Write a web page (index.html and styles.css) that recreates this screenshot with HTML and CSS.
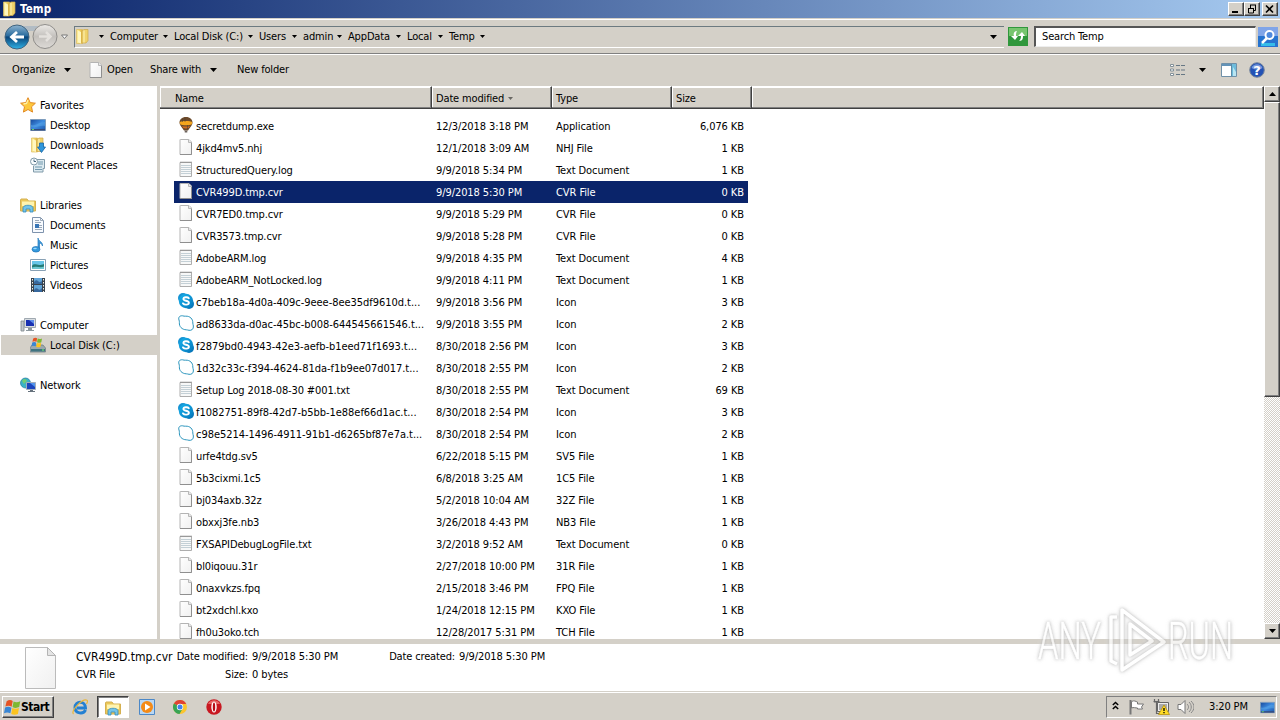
FILE: index.html
```html
<!DOCTYPE html>
<html lang="en">
<head>
<meta charset="utf-8">
<title>Temp</title>
<link rel="stylesheet" href="styles.css">
</head>
<body>
<svg class="defs" width="0" height="0" aria-hidden="true">
  <defs>
    <linearGradient id="gold" x1="0" x2="1"><stop offset="0" stop-color="#fff3a8"/><stop offset=".55" stop-color="#f3d665"/><stop offset="1" stop-color="#d9a936"/></linearGradient>
    <linearGradient id="paper" x1="0" y1="0" x2="1" y2="1"><stop offset="0" stop-color="#fff"/><stop offset="1" stop-color="#f0f0f0"/></linearGradient>
    <linearGradient id="blue" x1="0" y1="0" x2="1" y2="1"><stop offset="0" stop-color="#174a9c"/><stop offset=".5" stop-color="#3f8ce0"/><stop offset="1" stop-color="#1c54a8"/></linearGradient>
    <linearGradient id="sky" x1="0" y1="0" x2="1" y2="1"><stop offset="0" stop-color="#16b1ec"/><stop offset="1" stop-color="#0579bd"/></linearGradient>
    <linearGradient id="back" x1="0" y1="0" x2="0" y2="1"><stop offset="0" stop-color="#8fb4cf"/><stop offset=".45" stop-color="#286b9e"/><stop offset=".5" stop-color="#0a4479"/><stop offset="1" stop-color="#2fb2e6"/></linearGradient>
    <linearGradient id="fwd" x1="0" y1="0" x2="0" y2="1"><stop offset="0" stop-color="#eceae7"/><stop offset=".5" stop-color="#c3c0bc"/><stop offset="1" stop-color="#dedbd7"/></linearGradient>
    <symbol id="file" viewBox="0 0 16 16"><path d="M2.500.5h8.500l2.500 2.500v12.500h-11.500V.5z" fill="url(#paper)" stroke="#b4b4b4"/><path d="M13.500 3.500v12H2" fill="none" stroke="#8f8f8f"/><path d="M10.500.5v3h3" fill="#e8e8e8" stroke="#b8b8b8"/></symbol>
    <symbol id="text" viewBox="0 0 16 16"><path d="M2 1.500h11.500v14H2z" fill="#f7f8f8" stroke="#adadad"/><path d="M3 4.500h10M3 6.500h10M3 8.500h10M3 10.500h10M3 12.500h10" stroke="#c4d0d6"/><path d="M2.500 1.500h11" stroke="#858585" stroke-dasharray="1 1"/><path d="M2.500 .5h12" stroke="#c6c6c6" stroke-dasharray="1 1"/></symbol>
    <symbol id="skype" viewBox="0 0 16 16"><circle cx="5" cy="5" r="5" fill="#1593d3"/><circle cx="11" cy="11" r="5" fill="#0879bc"/><circle cx="8" cy="8" r="7.200" fill="url(#sky)"/><path d="M10.800 5.200C9.900 3.800 5.400 3.700 5.400 6c0 2.200 5.500 1.300 5.500 3.700 0 2.500-4.700 2.400-5.900.7" fill="none" stroke="#fff" stroke-width="1.900" stroke-linecap="round"/></symbol>
    <symbol id="skypeo" viewBox="0 0 16 16"><path d="M1 5C0 2 2 .5 4.600.8c1.200.2 1.600.6 3.100.4C12 .9 15 4 14.800 8c0 1.300.5 1.900.6 3 .3 3.300-2 4.700-4.400 4.300-1-.1-1.600-.5-2.700-.5C4 14.700.9 11.500 1.400 7.500 1.500 6.500 1.200 6 1 5z" fill="#fff" stroke="#2b95bd"/></symbol>
    <symbol id="balloon" viewBox="0 0 16 16"><path d="M8 0c4.200 0 6.500 2.500 6.500 5.500 0 3.200-3.300 5.700-4.500 8H6C4.800 11.200 1.500 8.700 1.500 5.500 1.500 2.500 3.800 0 8 0z" fill="#6c4a2a"/><path d="M1.700 5c2-1.500 10.500-1.500 12.600 0l-.6 2.400c-2 1-9.400 1-11.400 0z" fill="#f4a51d"/><path d="M4 9c2 .8 6 .8 8 0l-1.300 2C9 11.500 7 11.500 5.300 11z" fill="#d06c21"/><path d="M7 1v4M9.500 8v4M4.500 2v3" stroke="#413c3a" stroke-width=".5"/><path d="M6.700 13.500h2.600v2H6.700z" fill="#6d635c"/></symbol>
    <symbol id="folder" viewBox="0 0 16 16"><path d="M1.500 1h6v14h-6z" fill="url(#gold)" stroke="#dcba5c" stroke-width=".7"/><path d="M7 2.500 9 1h4v11l-2 2.500H7z" fill="#efd26b" stroke="#cfa94a" stroke-width=".7"/><path d="M3 2l3 1.500V15L3 14z" fill="#fff6bf"/><path d="M9 2v12" stroke="#fff4b8"/></symbol>
    <symbol id="star" viewBox="0 0 16 16"><path d="M8 .7l2.200 4.900 5.200.6-3.900 3.600 1.100 5.300L8 12.500l-4.600 2.600 1.100-5.300L.6 6.200l5.200-.6z" fill="#fdc83c" stroke="#e28a25"/><path d="M8 3 6.500 6.500 3.500 7" fill="none" stroke="#fff0a7" stroke-width="1.300"/></symbol>
    <symbol id="desktop" viewBox="0 0 16 16"><path d="M.5 2.500h15v11H.5z" fill="url(#blue)" stroke="#7d9cbd"/><path d="M1 12h14v1.500H1z" fill="#34497a"/><path d="M2 12.500h2" stroke="#5fd165"/><path d="M1 8c5 1 8-3 14-3v4c-5-1-9 2-14 1z" fill="#5aa7e8" opacity=".5"/></symbol>
    <symbol id="downloads" viewBox="0 0 16 16"><use href="#folder"/><path d="M9.500 6h4v4h2L11.500 15.500 7.500 10h2z" fill="#2f96dc" stroke="#1464a7" stroke-width=".8"/></symbol>
    <symbol id="recent" viewBox="0 0 16 16"><path d="M5 2.500h9.500v9H13v3.500H3.500V9" fill="#dceaf0" stroke="#819baa"/><path d="M8 5h5M8 7h5M5 10h7M5 12.500h7" stroke="#7299ae"/><circle cx="4" cy="4.500" r="3.500" fill="#f7fbfd" stroke="#829ba9"/><path d="M4 2.500v2h2" fill="none" stroke="#43647b"/></symbol>
    <symbol id="library" viewBox="0 0 16 16"><path d="M.5 3V14h15V4h-7L7 2H1z" fill="#ebc85a" stroke="#d5b050"/><path d="M2 4.500h12V9H2z" fill="#fff4b0"/><path d="M3 15V10.500C4 7.500 12 7.500 13 10.500V15h-3v-3H6v3z" fill="#74c4e9" stroke="#318bbc" stroke-width=".8"/></symbol>
    <symbol id="documents" viewBox="0 0 16 16"><path d="M2.500.5h8l3 3v12h-11z" fill="#f8fbff" stroke="#7e93ad"/><path d="M10.500.5v3h3M5 3.500h4M5 5.500h6M9 8.500h3M9 10.500h3M5 12.500h7" fill="none" stroke="#9ba9b8"/><path d="M5 7h4v4H5z" fill="#3976b6"/></symbol>
    <symbol id="music" viewBox="0 0 16 16"><path d="M8 1c.5 3.500 5 3.500 4.500 8-.5-2-2-3-3-3v6H8z" fill="#3d9adb" stroke="#2378bb" stroke-width=".7"/><ellipse cx="6" cy="12.300" rx="4" ry="2.800" fill="#3599dc" stroke="#2476b7" stroke-width=".7"/><ellipse cx="5" cy="11.500" rx="1.800" ry=".8" fill="#9bdcff"/></symbol>
    <symbol id="pictures" viewBox="0 0 16 16"><path d="M.5 2.500h15v11H.5z" fill="#fff" stroke="#88a1b5"/><path d="M2 4h12v8H2z" fill="#69c6e8"/><path d="M2 9c3-4 5 1 12-2v5H2z" fill="#267c76"/><path d="M2 10.500c5-2 8 1 12-1V12H2z" fill="#6dc8d1"/></symbol>
    <symbol id="videos" viewBox="0 0 16 16"><path d="M1 1h14v14H1z" fill="#38424e"/><path d="M4 1h8v6H4zm0 7h8v7H4z" fill="#62a5d9"/><path d="M4 5c4-5 4 3 8-1v3H4zm0 8c4-5 4 3 8-2v4H4z" fill="#37689d"/><path d="M2.500 2v13M13.500 2v13" stroke="#f2f2e5" stroke-dasharray="1.500 1.500"/></symbol>
    <symbol id="computer" viewBox="0 0 16 16"><path d="M1 4h3v10H1z" fill="#c3c8cc" stroke="#7b858b" stroke-width=".8"/><path d="M4.500 1.500h11v9h-11z" fill="#d7dce0" stroke="#a0a9b1"/><path d="M6 3h8v6H6z" fill="#1830b1"/><path d="m9 3 5 4V3z" fill="#5c8cea"/><path d="M8 11h4v2h2v1H6v-1h2z" fill="#8d989e"/></symbol>
    <symbol id="winflag" viewBox="0 0 16 16"><path d="M2.500 2c2-1.300 4-1.400 5.700-.2L7.200 7.300C5.500 6 3.500 6 1.300 7z" fill="#e65323"/><path d="M9 2.300c2 1 4 .8 6.300-.2l-1 5.500c-2 1-4.300 1.100-6.300 0z" fill="#7db832"/><path d="M1 8c2-1 4-1 6 .2l-1 5.300c-2-1.200-4-1-6-.2z" fill="#3986d4"/><path d="M7.800 8.500c2 1 4.200 1 6.300 0l-1 5.500c-2 1-4.300 1-6.300 0z" fill="#fbc31f"/></symbol>
    <symbol id="disk" viewBox="0 0 16 16"><path d="m2 8-2 3v4h15.500v-4L13 8z" fill="#9ba8ae" stroke="#687980" stroke-width=".7"/><path d="M1 12h14v2.500H1z" fill="#407480"/><path d="M12 13h2" stroke="#79f073"/><use href="#winflag" x="1" width="12" height="11"/></symbol>
    <symbol id="network" viewBox="0 0 16 16"><circle cx="5.500" cy="6" r="5" fill="#3ab2c7" stroke="#217b9d" stroke-width=".7"/><path d="M2 4c2-3 4-2 5 0L4 7z" fill="#70cc75"/><path d="M6.500 5.500h9v7h-9z" fill="#1b45bd" stroke="#a3adba"/><path d="m10 6 5 4V6z" fill="#5294ec"/><path d="M10 13h3v1h2v1H8v-1h2z" fill="#66727d"/></symbol>
    <symbol id="tri" viewBox="0 0 7 4"><path d="M0 0h7L3.500 4z"/></symbol>
  </defs>
</svg>

<div class="screen">
  <header class="titlebar">
    <svg class="ticon"><use href="#folder"/></svg><b>Temp</b>
    <div class="winbtns">
      <span class="btn"><svg viewBox="0 0 12 10"><path d="M2 8h6" stroke="#000" stroke-width="2"/></svg></span>
      <span class="btn"><svg viewBox="0 0 12 10"><path d="M4 1h6M4.500 1v3M9.500 1v5.500H8M2 4.500h6M2.500 4v5h5V4" fill="none" stroke="#000"/></svg></span>
      <span class="btn last"><svg viewBox="0 0 12 10"><path d="m2 1.500 7 7m0-7-7 7" stroke="#000" stroke-width="1.600"/></svg></span>
    </div>
  </header>

  <div class="address">
    <svg class="nav" width="66" height="30" viewBox="0 0 66 30"><path d="M13 4h28v5H13z" fill="#b2bcc4"/><circle cx="13" cy="15" r="12" fill="url(#back)" stroke="#40647f"/><path d="M20 15H8m5-5-5.500 5 5.500 5" fill="none" stroke="#fff" stroke-width="2.800"/><circle cx="41" cy="14.500" r="12" fill="url(#fwd)" stroke="#8f8d8a"/><path d="M35 14.500h11m-4-4.500 4.500 4.500L42 19" fill="none" stroke="#e4e1dd" stroke-width="2.500"/><path d="M57.500 13h6l-3 3.500z" fill="#fff" stroke="#777"/></svg>
    <div class="crumbs">
      <svg class="cfold"><use href="#folder"/></svg>
      <svg class="arr"><use href="#tri"/></svg><span class="c1">Computer</span>
      <svg class="arr"><use href="#tri"/></svg><span class="c2">Local Disk (C:)</span>
      <svg class="arr"><use href="#tri"/></svg><span class="c3">Users</span>
      <svg class="arr"><use href="#tri"/></svg><span class="c4">admin</span>
      <svg class="arr"><use href="#tri"/></svg><span class="c5">AppData</span>
      <svg class="arr"><use href="#tri"/></svg><span class="c6">Local</span>
      <svg class="arr"><use href="#tri"/></svg><span class="c7">Temp</span>
      <svg class="arr"><use href="#tri"/></svg>
      <svg class="big end"><use href="#tri"/></svg>
    </div>
    <svg class="refresh" width="20" height="19" viewBox="0 0 20 19"><path d="M0 0h20v19H0z" fill="#30973c"/><path d="M1 1h18v8H1z" fill="#77c56f"/><path d="M9 4C6 4 5 7 6 9H3l4 4 3-4H8c0-2 0-3 1-5zm2 10c4 0 4-3 4-5h2l-3-4-4 4h3c0 3-1 4-2 5z" fill="#fff"/></svg>
    <div class="search">Search Temp</div>
    <svg class="go" width="20" height="20" viewBox="0 0 20 20"><path d="M0 0h20v20H0z" fill="#2673cf"/><path d="M0 0h20v9H0z" fill="#80a5e8"/><path d="M3 16h14v3H3z" fill="#34bce9"/><circle cx="11.500" cy="8" r="4" fill="#4f89dd" stroke="#fff" stroke-width="2"/><path d="m9 11-5 5" stroke="#fff" stroke-width="2.500"/></svg>
  </div>

  <div class="commands">
    <span class="k1">Organize</span><svg class="big"><use href="#tri"/></svg>
    <svg class="open"><use href="#file"/></svg><span class="k2">Open</span>
    <span class="k3">Share with</span><svg class="big"><use href="#tri"/></svg>
    <span class="k4">New folder</span>
    <div class="cmdright">
      <svg width="16" height="14" viewBox="0 0 16 14"><path d="M.5 1.500h3v2h-3zm0 4.500h3v2h-3zm0 4.500h3v2h-3z" fill="#fff" stroke="#829099"/><path d="M6 2.500h4m1 0h4M6 7h4m1 0h4M6 11.500h4m1 0h4" stroke="#667784"/></svg>
      <svg class="big"><use href="#tri"/></svg>
      <svg class="pane" width="17" height="14" viewBox="0 0 17 14"><path d="M.5.5h15v13H.5z" fill="#fff" stroke="#6f90a8"/><path d="M1 2h9" stroke="#6393b8" stroke-width="2"/><path d="M11 1h4v12h-4z" fill="#6ebcdc"/><path d="M10.500 1v12" stroke="#5b8aa6"/><path d="m12 4 3 5v4h-3z" fill="#b9e5f2"/></svg>
      <svg class="help" width="16" height="16" viewBox="0 0 16 16"><circle cx="8" cy="8" r="7.300" fill="#2352b5" stroke="#77869c"/><path d="M2.500 6C4 1 12 1 13.500 6 10 8 6 8 2.500 6z" fill="#7697dc"/><text x="8" y="12.500" text-anchor="middle" class="q">?</text></svg>
    </div>
  </div>

  <main class="body">
    <nav class="side">
      <div class="s root"><svg><use href="#star"/></svg><span>Favorites</span></div>
      <div class="s"><svg><use href="#desktop"/></svg><span>Desktop</span></div>
      <div class="s"><svg><use href="#downloads"/></svg><span>Downloads</span></div>
      <div class="s"><svg><use href="#recent"/></svg><span>Recent Places</span></div>
      <div class="s root gap"><svg><use href="#library"/></svg><span>Libraries</span></div>
      <div class="s"><svg><use href="#documents"/></svg><span>Documents</span></div>
      <div class="s"><svg><use href="#music"/></svg><span>Music</span></div>
      <div class="s"><svg><use href="#pictures"/></svg><span>Pictures</span></div>
      <div class="s"><svg><use href="#videos"/></svg><span>Videos</span></div>
      <div class="s root gap"><svg><use href="#computer"/></svg><span>Computer</span></div>
      <div class="s on"><svg><use href="#disk"/></svg><span>Local Disk (C:)</span></div>
      <div class="s root gap"><svg><use href="#network"/></svg><span>Network</span></div>
    </nav>
    <section class="list">
      <div class="head"><span>Name</span><span>Date modified<svg class="sort"><use href="#tri"/></svg></span><span>Type</span><span>Size</span><span></span></div>
      <div class="rows">
        <div class="r"><svg><use href="#balloon"/></svg><span>secretdump.exe</span><span>12/3/2018 3:18 PM</span><span>Application</span><span>6,076 KB</span></div>
        <div class="r"><svg><use href="#file"/></svg><span>4jkd4mv5.nhj</span><span>12/1/2018 3:09 AM</span><span>NHJ File</span><span>1 KB</span></div>
        <div class="r"><svg><use href="#text"/></svg><span>StructuredQuery.log</span><span>9/9/2018 5:34 PM</span><span>Text Document</span><span>1 KB</span></div>
        <div class="r sel"><svg><use href="#file"/></svg><span>CVR499D.tmp.cvr</span><span>9/9/2018 5:30 PM</span><span>CVR File</span><span>0 KB</span></div>
        <div class="r"><svg><use href="#file"/></svg><span>CVR7ED0.tmp.cvr</span><span>9/9/2018 5:29 PM</span><span>CVR File</span><span>0 KB</span></div>
        <div class="r"><svg><use href="#file"/></svg><span>CVR3573.tmp.cvr</span><span>9/9/2018 5:28 PM</span><span>CVR File</span><span>0 KB</span></div>
        <div class="r"><svg><use href="#text"/></svg><span>AdobeARM.log</span><span>9/9/2018 4:35 PM</span><span>Text Document</span><span>4 KB</span></div>
        <div class="r"><svg><use href="#text"/></svg><span>AdobeARM_NotLocked.log</span><span>9/9/2018 4:11 PM</span><span>Text Document</span><span>1 KB</span></div>
        <div class="r long"><svg><use href="#skype"/></svg><span>c7beb18a-4d0a-409c-9eee-8ee35df9610d.t...</span><span>9/9/2018 3:56 PM</span><span>Icon</span><span>3 KB</span></div>
        <div class="r long"><svg><use href="#skypeo"/></svg><span>ad8633da-d0ac-45bc-b008-644545661546.t...</span><span>9/9/2018 3:55 PM</span><span>Icon</span><span>2 KB</span></div>
        <div class="r long"><svg><use href="#skype"/></svg><span>f2879bd0-4943-42e3-aefb-b1eed71f1693.t...</span><span>8/30/2018 2:56 PM</span><span>Icon</span><span>3 KB</span></div>
        <div class="r long"><svg><use href="#skypeo"/></svg><span>1d32c33c-f394-4624-81da-f1b9ee07d017.t...</span><span>8/30/2018 2:55 PM</span><span>Icon</span><span>2 KB</span></div>
        <div class="r"><svg><use href="#text"/></svg><span>Setup Log 2018-08-30 #001.txt</span><span>8/30/2018 2:55 PM</span><span>Text Document</span><span>69 KB</span></div>
        <div class="r long"><svg><use href="#skype"/></svg><span>f1082751-89f8-42d7-b5bb-1e88ef66d1ac.t...</span><span>8/30/2018 2:54 PM</span><span>Icon</span><span>3 KB</span></div>
        <div class="r long"><svg><use href="#skypeo"/></svg><span>c98e5214-1496-4911-91b1-d6265bf87e7a.t...</span><span>8/30/2018 2:54 PM</span><span>Icon</span><span>2 KB</span></div>
        <div class="r"><svg><use href="#file"/></svg><span>urfe4tdg.sv5</span><span>6/22/2018 5:15 PM</span><span>SV5 File</span><span>1 KB</span></div>
        <div class="r"><svg><use href="#file"/></svg><span>5b3cixmi.1c5</span><span>6/8/2018 3:25 AM</span><span>1C5 File</span><span>1 KB</span></div>
        <div class="r"><svg><use href="#file"/></svg><span>bj034axb.32z</span><span>5/2/2018 10:04 AM</span><span>32Z File</span><span>1 KB</span></div>
        <div class="r"><svg><use href="#file"/></svg><span>obxxj3fe.nb3</span><span>3/26/2018 4:43 PM</span><span>NB3 File</span><span>1 KB</span></div>
        <div class="r"><svg><use href="#text"/></svg><span>FXSAPIDebugLogFile.txt</span><span>3/2/2018 9:52 AM</span><span>Text Document</span><span>0 KB</span></div>
        <div class="r"><svg><use href="#file"/></svg><span>bl0iqouu.31r</span><span>2/27/2018 10:00 PM</span><span>31R File</span><span>1 KB</span></div>
        <div class="r"><svg><use href="#file"/></svg><span>0naxvkzs.fpq</span><span>2/15/2018 3:46 PM</span><span>FPQ File</span><span>1 KB</span></div>
        <div class="r"><svg><use href="#file"/></svg><span>bt2xdchl.kxo</span><span>1/24/2018 12:15 PM</span><span>KXO File</span><span>1 KB</span></div>
        <div class="r"><svg><use href="#file"/></svg><span>fh0u3oko.tch</span><span>12/28/2017 5:31 PM</span><span>TCH File</span><span>1 KB</span></div>
      </div>
    </section>
    <div class="scroll"><span class="sb"><svg><use href="#tri" transform="rotate(180 3.500 2)"/></svg></span><span class="thumb"></span><span class="track"></span><span class="sb"><svg><use href="#tri"/></svg></span></div>
  </main>

  <section class="details">
    <svg class="bigfile" viewBox="0 0 32 42"><path d="M.5.5h22l8 8v33H.5z" fill="url(#paper)" stroke="#bbb"/><path d="M22.500.5v8h8z" fill="#e4e4e4" stroke="#b4b4b4"/></svg>
    <div class="dn"><span class="fn">CVR499D.tmp.cvr</span><span>CVR File</span></div>
    <div class="dl"><span>Date modified:</span><span>Size:</span></div>
    <div class="dv"><span>9/9/2018 5:30 PM</span><span>0 bytes</span></div>
    <div class="dl created"><span>Date created:</span></div>
    <div class="dv"><span>9/9/2018 5:30 PM</span></div>
  </section>

  <footer class="taskbar">
    <div class="start"><svg><use href="#winflag"/></svg><b>Start</b></div>
    <svg class="q1" width="16" height="16" viewBox="0 0 16 16"><path d="M13.500 11c-2 4.500-10.500 4-10.500-2.500C3 1.500 13.500 1.500 13.500 9H5" fill="none" stroke="#2380d2" stroke-width="3"/><path d="M1.500 15C-2 12 11-1 15 1.300c1 .7.500 2-.5 3.700" fill="none" stroke="#e9b63a" stroke-width="1.200"/></svg>
    <div class="active"><svg><use href="#library"/></svg></div>
    <svg class="q2" width="16" height="16" viewBox="0 0 16 16"><path d="M.5.5h15v15H.5z" fill="#b9d7f3" stroke="#4c88c7"/><circle cx="8" cy="8" r="6" fill="#f48a16"/><path d="m6 4.500 5.500 3.500L6 11.500z" fill="#fff"/></svg>
    <svg class="q3" width="14" height="14" viewBox="0 0 14 14"><circle cx="7" cy="7" r="7" fill="#fbc52d"/><path d="M7 7 .9 3.500A7 7 0 0 1 13.200 4H7z" fill="#df4335"/><path d="M7 7 .9 3.500A7 7 0 0 0 6.500 14l3.200-5.500z" fill="#38a455"/><circle cx="7" cy="7" r="3.200" fill="#fff"/><circle cx="7" cy="7" r="2.500" fill="#4182ed"/></svg>
    <svg class="q4" width="16" height="16" viewBox="0 0 16 16"><circle cx="8" cy="8" r="7.700" fill="#c81821"/><path d="M2 5C4 0 12 0 14 5z" fill="#e76565"/><ellipse cx="8" cy="8" rx="2.700" ry="5.500" fill="#fff"/><ellipse cx="8" cy="8" rx="1.200" ry="4.600" fill="#b80c17"/></svg>
    <div class="tray">
      <svg class="t0" width="7" height="9" viewBox="0 0 7 9"><path d="m.8 4 2.700-2.500L6.200 4M.8 8l2.700-2.500L6.200 8" fill="none" stroke="#000" stroke-width="1.500"/></svg>
      <svg class="t1" width="16" height="16" viewBox="0 0 16 16"><path d="M1.500 1v14.500" stroke="#777" stroke-width="2"/><path d="M2.500 2.500c3-1.500 4 0 6 .5v2h6l-2 3 1 2h-5V9c-2 0-4-1-6 0z" fill="#fff" stroke="#777"/></svg>
      <svg class="t2" width="17" height="16" viewBox="0 0 17 16"><path d="M4.500 3.500h11v9h-11z" fill="#eee" stroke="#666"/><path d="M6 5h8v6H6z" fill="#aaa"/><path d="M1.500 0v3h4V0M3.500 3v11.500H8M.5 2.500h6" fill="none" stroke="#666" stroke-width="1.200"/><path d="m11 6 5.500 9.500h-11z" fill="#ffdc27" stroke="#b28a00" stroke-width=".7"/><path d="M11 9v3m0 1v1.300" stroke="#000" stroke-width="1.300"/></svg>
      <svg class="t3" width="17" height="14" viewBox="0 0 17 14"><path d="M1 4.500h3l4-4v13l-4-4H1z" fill="#fff" stroke="#777"/><path d="M10 4c2 2 2 4 0 6m2-8c3 3 3 7 0 10m2-11c4 4 4 8 0 12" fill="none" stroke="#888"/></svg>
      <span>3:20 PM</span>
      <svg class="t4"><use href="#desktop"/></svg>
    </div>
  </footer>

  <svg class="watermark" width="210" height="80" viewBox="0 0 210 80">
    <g class="wm">
      <text x="8" y="56" textLength="63" lengthAdjust="spacingAndGlyphs">ANY</text>
      <text x="138" y="56" textLength="65" lengthAdjust="spacingAndGlyphs">RUN</text>
      <path d="M87 14h-6v44l6 3M92 7v60l42-28zM100 21v31l22-14z" fill="none" stroke="#fff" stroke-width="3.500" stroke-linejoin="round"/>
    </g>
  </svg>
</div>
</body>
</html>
```
FILE: styles.css
```css
* { box-sizing: border-box; }
body { margin: 0; background: #fff; color: #000; overflow: hidden;
  font: 11px/14px "DejaVu Sans Condensed", "DejaVu Sans", sans-serif; font-stretch: condensed; letter-spacing: -.15px; }
svg { flex: none; display: block; }
span { white-space: nowrap; }
.defs { position: absolute; }
.screen { position: relative; width: 1280px; height: 720px; display: flex; flex-direction: column; background: #d4d0c8; overflow: hidden; }

.titlebar { height: 18px; display: flex; align-items: center; background: linear-gradient(90deg, #0a246a, #a6caf0); color: #fff; padding-left: 2px; font-size: 11.500px; letter-spacing: .1px; }
.ticon { width: 16px; height: 16px; margin-right: 2px; }
.winbtns { margin-left: auto; display: flex; padding-right: 2px; }
.btn, .sb, .thumb, .start { background: #d4d0c8; border: 1px solid; border-color: #fff #404040 #404040 #fff; box-shadow: inset -1px -1px #808080; }
.btn { width: 16px; height: 14px; }
.btn svg { width: 12px; height: 10px; margin: 1px; }
.btn.last { margin-left: 2px; }

.address { height: 35px; margin-top: 1px; display: flex; align-items: center; border-top: 1px solid #fff; border-bottom: 1px solid #808080; box-shadow: 0 1px #fff; padding: 0 2px; }
.nav { margin-left: 2px; margin-right: 4px; }
.crumbs { width: 930px; height: 22px; display: flex; align-items: center; border-top: 1px solid #6c7a80; border-left: 1px solid #6c7a80; border-bottom: 1px solid #fff; }
.cfold { width: 16px; height: 17px; margin-right: 8px; }
.arr { width: 5px; height: 3px; margin: 0 6px 0 0; }
.crumbs span { flex: none; }
.c1 { width: 53px; } .c2 { width: 74px; } .c3 { width: 33px; } .c4 { width: 34px; } .c5 { width: 48px; } .c6 { width: 31px; } .c7 { width: 31px; }
.big { width: 7px; height: 4px; }
.end { margin-left: auto; margin-right: 7px; }
.refresh { margin-left: 4px; }
.search { margin-left: 6px; width: 222px; height: 21px; background: #fff; border: 1px solid #eee; border-top: 2px solid #555; border-left: 2px solid #555; padding: 2px 0 0 6px; }
.go { margin-left: 2px; }

.commands { height: 31px; padding: 0 15px 2px 12px; display: flex; align-items: center; margin-top: 1px; }
.k1 { width: 52px; }
.open { width: 16px; height: 16px; margin: 0 3px 0 17px; }
.k2 { width: 43px; } .k3 { width: 60px; } .k4 { margin-left: 20px; }
.cmdright { margin-left: auto; display: flex; align-items: center; }
.cmdright .big { margin-left: 13px; }
.pane { margin-left: 15px; } .help { margin-left: 11px; }
.q { font: bold 13px "DejaVu Sans", sans-serif; fill: #fff; }

.body { height: 553px; display: flex; }
.side { width: 160px; background: #fff; border-right: 3px solid #d4d0c8; padding: 9px 0 0 1px; }
.s { height: 20px; display: flex; align-items: center; padding-left: 29px; letter-spacing: -.1px; }
.s span { padding-top: 1px; margin-bottom: -1px; }
.s svg { width: 16px; height: 16px; margin-right: 4px; }
.s.root { padding-left: 19px; }
.gap { margin-top: 20px; }
.on { background: #d4d0c8; }
.list { width: 1104px; background: #fff; overflow: hidden; }
.head { height: 23px; display: flex; background: #d4d0c8; }
.head span { height: 23px; border-top: 1px solid #fff; border-right: 1px solid #404040; border-bottom: 1px solid #404040; box-shadow: inset -1px -1px #808080, inset 1px 1px #fff; padding: 2px 0 0 4px; width: 120px; display: flex; align-items: center; }
.head span:first-child { width: 272px; padding-left: 15px; }
.head span:nth-child(4) { width: 80px; }
.head span:last-child { width: 512px; }
.sort { width: 5px; height: 3px; margin-left: 4px; opacity: .5; }
.rows { padding: 6px 0 0 14px; }
.r { width: 574px; height: 22px; display: grid; grid-template-columns: 22px 240px 120px 100px 88px; align-items: center; }
.r svg { width: 16px; height: 16px; margin-left: 4px; margin-top: -3px; }
.r span { padding-top: 1px; margin-bottom: -1px; letter-spacing: -.08px; }
.r span:nth-child(2) { letter-spacing: -.12px; }
.r.long span:nth-child(2) { letter-spacing: -.04px; }
.r span:last-child { text-align: right; }
.r.sel { background: #0a246a; color: #fff; }
.scroll { width: 16px; display: flex; flex-direction: column; }
.sb { height: 16px; display: flex; align-items: center; justify-content: center; }
.sb svg { width: 7px; height: 4px; }
.thumb { height: 295px; }
.track { flex: 1; background: repeating-conic-gradient(#fff 0 25%, #d4d0c8 0 50%) 0 0 / 2px 2px; }

.details { height: 53px; border-top: 5px solid #d4d0c8; background: #fff; display: flex; padding: 3px 0 0 25px; }
.bigfile { width: 32px; height: 42px; }
.dn { margin-left: 19px; width: 98px; }
.details div { display: flex; flex-direction: column; gap: 4px; padding-top: 3px; }
.details .dv { letter-spacing: -.08px; }
.fn { font-size: 12px; letter-spacing: 0; }
.dl { width: 74px; align-items: flex-end; }
.dv { margin-left: 4px; width: 130px; }
.created { width: 73px; }

.taskbar { height: 28px; display: flex; align-items: center; padding: 1px 3px 0 2px; border-top: 1px solid #fff; box-shadow: 0 -1px #d4d0c8; }
.start { width: 52px; height: 22px; display: flex; align-items: center; padding-left: 1px; font-size: 12px; letter-spacing: -.5px; }
.start svg { width: 17px; height: 17px; }
.q1 { margin-left: 18px; }
.active { width: 32px; height: 22px; margin-left: 9px; background: #fff; border: 1px solid; border-color: #404040 #fff #fff #404040; box-shadow: inset 1px 1px #808080; padding: 3px 0 0 7px; }
.active svg { width: 16px; height: 16px; }
.q2 { margin-left: 10px; } .q3 { margin-left: 18px; } .q4 { margin-left: 19px; }
.tray { margin-left: auto; width: 171px; height: 22px; border: 1px solid; border-color: #808080 #fff #fff #808080; display: flex; align-items: center; padding-left: 5px; }
.t0 { margin-top: -3px; }
.t1 { margin-left: 10px; } .t2 { margin-left: 8px; } .t3 { margin-left: 7px; }
.tray span { width: 40px; margin-left: 15px; }
.t4 { width: 15px; height: 15px; margin-left: 11px; }

.watermark { position: absolute; left: 1030px; top: 603px; opacity: .75; overflow: visible; }
.wm { filter: drop-shadow(0 0 1.500px #aaa) drop-shadow(0 0 2px #ddd); }
.wm text { font: 300 51px "Roboto", sans-serif; letter-spacing: 0; fill: #fff; stroke: #fff; stroke-width: .5px; }
```
